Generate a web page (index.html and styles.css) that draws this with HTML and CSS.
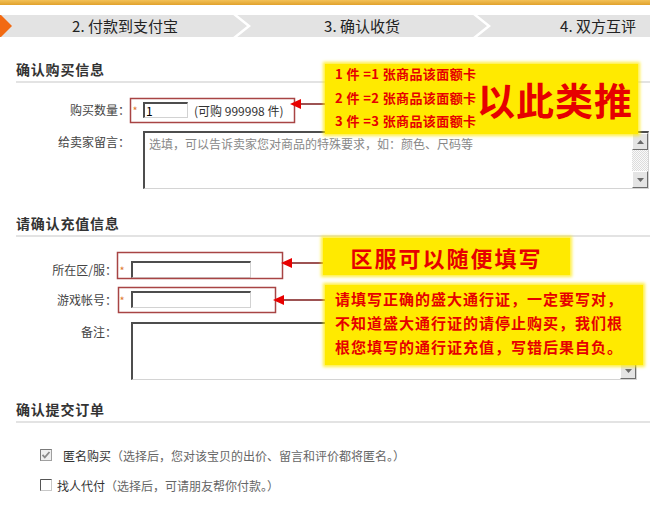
FILE: index.html
```html
<!DOCTYPE html>
<html lang="zh-CN">
<head>
<meta charset="utf-8">
<title>确认订单</title>
<link rel="stylesheet" href="styles.css">
</head>
<body>
<div class="page">
  <div class="topline"></div>
  <div class="steps">
    <svg class="lead" width="12" height="22" viewBox="0 0 12 22"><polygon points="0,0 1,0 12,11 1,22 0,22" fill="#f26a12"/></svg>
    <div class="step step2">2. 付款到支付宝</div>
    <svg class="sep" width="18" height="22" viewBox="0 0 18 22"><polyline points="1,-1 16,11 1,23" fill="none" stroke="#fff" stroke-width="2.5"/></svg>
    <div class="step step3">3. 确认收货</div>
    <svg class="sep" width="18" height="22" viewBox="0 0 18 22"><polyline points="1,-1 16,11 1,23" fill="none" stroke="#fff" stroke-width="2.5"/></svg>
    <div class="step step4">4. 双方互评</div>
  </div>

  <section class="sec sec1">
    <h2 class="title">确认购买信息</h2>
    <div class="row qty-row">
      <span class="lbl">购买数量：</span>
      <span class="star">*</span>
      <div class="inp qty">1</div>
      <span class="avail">(可购 999998 件)</span>
    </div>
    <div class="row ta-row msg-row">
      <span class="lbl">给卖家留言：</span>
      <div class="ta ta1">
        <div class="ph">选填，可以告诉卖家您对商品的特殊要求，如：颜色、尺码等</div>
        <div class="sb">
          <div class="sbtn"><svg width="7" height="4" viewBox="0 0 7 4"><polygon points="3.5,0 7,4 0,4" fill="#6a6a6a"/></svg></div>
          <div class="sbtrack"></div>
          <div class="sbtn"><svg width="7" height="4" viewBox="0 0 7 4"><polygon points="0,0 7,0 3.5,4" fill="#6a6a6a"/></svg></div>
        </div>
      </div>
    </div>
  </section>

  <section class="sec sec2">
    <h2 class="title">请确认充值信息</h2>
    <div class="row field-row rowA">
      <span class="lbl">所在区/服：</span>
      <span class="star">*</span>
      <div class="inp inp2"></div>
    </div>
    <div class="row field-row rowB">
      <span class="lbl">游戏帐号：</span>
      <span class="star">*</span>
      <div class="inp inp2"></div>
    </div>
    <div class="row ta-row rowC">
      <span class="lbl">备注：</span>
      <div class="ta ta2">
        <div class="ph"></div>
        <div class="sb">
          <div class="sbtn"><svg width="7" height="4" viewBox="0 0 7 4"><polygon points="3.5,0 7,4 0,4" fill="#6a6a6a"/></svg></div>
          <div class="sbtrack"></div>
          <div class="sbtn"><svg width="7" height="4" viewBox="0 0 7 4"><polygon points="0,0 7,0 3.5,4" fill="#6a6a6a"/></svg></div>
        </div>
      </div>
    </div>
  </section>

  <section class="sec sec3">
    <h2 class="title">确认提交订单</h2>
    <div class="chk-row chk1">
      <svg class="chk" width="12" height="12" viewBox="0 0 12 12"><rect x="0.5" y="0.5" width="11" height="11" fill="#efefef" stroke="#a0a0a0"/><path d="M0.5 11.5 V0.5 H11.5" fill="none" stroke="#7a7a7a"/><path d="M2.5 5.8 L4.8 8.3 L9.5 3" fill="none" stroke="#8a8a8a" stroke-width="1.8"/></svg>
      <span class="cname">匿名购买</span><span class="cnote">（选择后，您对该宝贝的出价、留言和评价都将匿名。）</span>
    </div>
    <div class="chk-row chk2">
      <svg class="chk" width="12" height="12" viewBox="0 0 12 12"><rect x="0.5" y="0.5" width="11" height="11" fill="#fff" stroke="#c8c8c8"/><path d="M0.5 11.5 V0.5 H11.5" fill="none" stroke="#555"/></svg>
      <span class="cname">找人代付</span><span class="cnote">（选择后，可请朋友帮你付款。）</span>
    </div>
  </section>

  <svg class="annot" width="650" height="508" viewBox="0 0 650 508">
    <g fill="none" stroke="#a84444" stroke-width="1.5">
      <rect x="130.5" y="98.5" width="164" height="24"/>
      <rect x="117.5" y="252.5" width="165" height="26"/>
      <rect x="118.5" y="287.5" width="157" height="25"/>
    </g>
    <g stroke="#7d1a1a" stroke-width="1.5">
      <line x1="299" y1="104" x2="326" y2="104"/>
      <line x1="290" y1="263" x2="326" y2="263"/>
      <line x1="282" y1="300" x2="328" y2="300"/>
    </g>
    <g fill="#e80000">
      <polygon points="290,104 301,99 301,109"/>
      <polygon points="281,263 292,258 292,268"/>
      <polygon points="273,300 284,295 284,305"/>
    </g>
  </svg>

  <div class="callout callout-a">
    <div class="lines">
      <div>1 件 =1 张商品该面额卡</div>
      <div>2 件 =2 张商品该面额卡</div>
      <div>3 件 =3 张商品该面额卡</div>
    </div>
    <div class="big">以此类推</div>
  </div>
  <div class="callout callout-b">区服可以随便填写</div>
  <div class="callout callout-c">
    <div>请填写正确的盛大通行证，一定要写对，</div>
    <div>不知道盛大通行证的请停止购买，我们根</div>
    <div>根您填写的通行证充值，写错后果自负。</div>
  </div>
</div>
</body>
</html>
```
FILE: styles.css
```css
html, body {
  margin: 0;
  padding: 0;
}
body {
  width: 650px;
  height: 508px;
  overflow: hidden;
  background: #fff;
  font-family: "Noto Sans CJK SC", "Noto Sans", sans-serif;
  font-size: 12px;
  color: #444;
}
.page {
  position: relative;
  width: 650px;
  height: 508px;
  overflow: hidden;
}
.topline {
  height: 5px;
  background: linear-gradient(#f2c157, #e1a12c);
}
.steps {
  display: flex;
  height: 22px;
  margin-top: 10px;
  background: #e3e3e3;
  white-space: nowrap;
}
.lead, .sep {
  flex: none;
  display: block;
}
.step {
  flex: none;
  text-align: center;
  font-size: 15px;
  line-height: 22px;
  color: #222;
}
.step2 {
  width: 216px;
  padding-left: 5px;
}
.step3 {
  width: 222px;
}
.step4 {
  width: 214px;
}

.title {
  margin: 0 0 0 16px;
  font-size: 14px;
  font-weight: bold;
  letter-spacing: 0.8px;
  line-height: 20px;
  padding-bottom: 2px;
  border-bottom: 2px solid #e3e3e3;
  color: #333;
}
.sec1 .title { margin-top: 22px; }
.sec2 .title { margin-top: 24px; }
.sec3 .title { margin-top: 19px; }

.row {
  display: flex;
  align-items: center;
}
.lbl {
  flex: none;
  text-align: right;
  line-height: 16px;
  color: #444;
}
.sec1 .lbl { width: 130px; }
.sec2 .lbl { width: 117px; }
.star {
  flex: none;
  text-align: center;
  color: #e07a2e;
  font-size: 11px;
  line-height: 16px;
}
.sec1 .star {
  width: 8px;
  margin-left: 1px;
  margin-right: 4px;
}
.sec2 .star {
  width: 10px;
  margin-right: 4px;
}
.inp {
  flex: none;
  box-sizing: border-box;
  border-top: 2px solid #4d4d4d;
  border-left: 2px solid #4d4d4d;
  border-right: 1px solid #d2d2d2;
  border-bottom: 1px solid #d2d2d2;
  background: #fff;
  color: #000;
  font-size: 12px;
  line-height: 13px;
  padding-left: 1px;
}
.qty {
  width: 45px;
  height: 16px;
}
.avail {
  margin-left: 6px;
  color: #333;
}
.qty-row {
  margin-top: 19px;
  height: 16px;
}
.ta-row {
  align-items: flex-start;
}
.msg-row {
  margin-top: 13px;
}
.msg-row .lbl {
  line-height: 20px;
  padding-top: 1px;
}
.ta {
  flex: none;
  box-sizing: border-box;
  width: 506px;
  height: 58px;
  display: flex;
  border-top: 2px solid #4d4d4d;
  border-left: 2px solid #4d4d4d;
  border-right: 1px solid #d4d4d4;
  border-bottom: 1px solid #d4d4d4;
  background: #fff;
}
.ta1 { margin-left: 13px; }
.ta2 { margin-left: 14px; }
.ph {
  flex: 1;
  color: #888;
  padding: 3px 4px;
  line-height: 16px;
}
.sb {
  flex: none;
  width: 16px;
  display: flex;
  flex-direction: column;
  background: repeating-conic-gradient(#dcdcdc 0 25%, #fafafa 0 50%) 0 0 / 2px 2px;
}
.sbtn {
  flex: none;
  box-sizing: border-box;
  height: 17px;
  display: flex;
  align-items: center;
  justify-content: center;
  background: #e4e4e4;
  border-top: 1px solid #fff;
  border-left: 1px solid #fff;
  border-right: 1px solid #6d6d6d;
  border-bottom: 1px solid #6d6d6d;
}
.sbtrack { flex: 1; }

.field-row { height: 17px; }
.inp2 {
  width: 120px;
  height: 17px;
}
.rowA { margin-top: 24px; }
.rowB { margin-top: 13px; }
.rowC { margin-top: 14px; }
.rowC .lbl { line-height: 20px; }

.chk-row {
  display: flex;
  align-items: center;
  height: 16px;
  margin-left: 40px;
  white-space: nowrap;
}
.chk { flex: none; display: block; }
.chk1 { margin-top: 24px; }
.chk2 { margin-top: 14px; }
.chk1 .cname { margin-left: 11px; }
.chk2 .cname { margin-left: 5px; }
.cname { color: #333; }
.cnote { color: #666; }

.annot {
  position: absolute;
  left: 0;
  top: 0;
  pointer-events: none;
}
.callout {
  position: absolute;
  box-sizing: border-box;
  background: #ffea00;
  box-shadow: 0 0 3px 2px rgba(255, 234, 0, 0.75);
  color: #e60000;
  font-weight: bold;
  white-space: nowrap;
}
.callout-a {
  left: 325px;
  top: 64px;
  width: 313px;
  height: 70px;
  display: flex;
  align-items: center;
  padding-left: 10px;
  padding-right: 5px;
}
.callout-a .lines {
  align-self: flex-start;
  margin-top: -2px;
  font-size: 13px;
  line-height: 23.5px;
  letter-spacing: 0.4px;
}
.callout-a .big {
  margin-left: auto;
  font-size: 38px;
  line-height: 44px;
  letter-spacing: 1px;
}
.callout-b {
  left: 323px;
  top: 238px;
  width: 247px;
  height: 37px;
  padding-top: 2px;
  text-align: center;
  font-size: 22px;
  line-height: 34px;
  letter-spacing: 2px;
}
.callout-c {
  left: 325px;
  top: 285px;
  width: 318px;
  height: 80px;
  padding: 2px 0 0 10px;
  font-size: 15px;
  line-height: 24px;
  letter-spacing: 1px;
}
```
